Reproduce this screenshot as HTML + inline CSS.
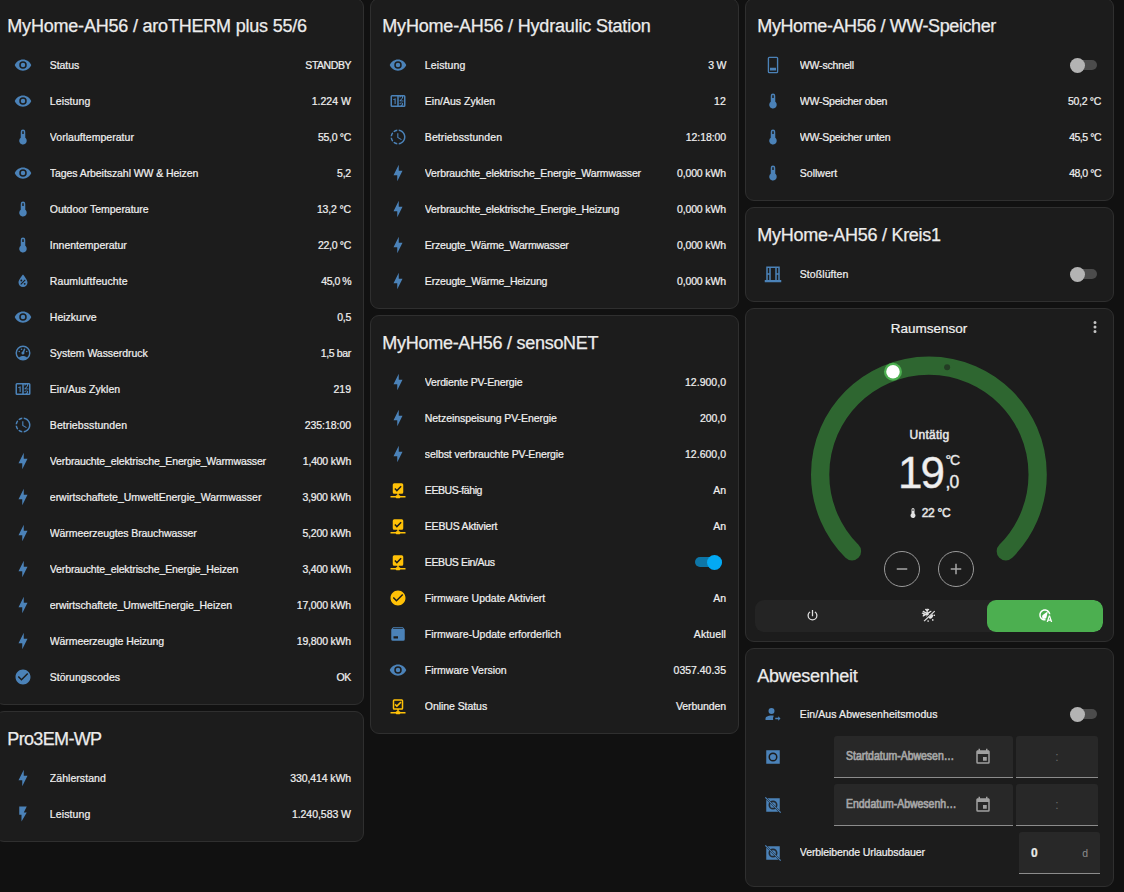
<!DOCTYPE html>
<html><head><meta charset="utf-8"><title>Dashboard</title><style>
*{box-sizing:border-box;margin:0;padding:0}
html,body{width:1124px;height:892px;overflow:hidden;background:#111111}
body{position:relative;-webkit-text-stroke:0.22px #f0f0f0;font-family:"Liberation Sans",sans-serif;color:#f0f0f0;font-size:10.5px}
.card{position:absolute;background:#1c1c1c;border:1px solid #2f2f2f;border-radius:9px;overflow:hidden}
.hdr{height:51px;padding:9px 12px 0 11.3px;-webkit-text-stroke:0.25px #ececec;line-height:36px;font-size:18px;white-space:nowrap;letter-spacing:-0.4px;color:#ececec}
.row{display:flex;align-items:center;height:30px;margin:0 12px 6px 12px;white-space:nowrap}
.ib{flex:0 0 30px;height:30px;display:flex;align-items:center;justify-content:center}
.ic{width:18px;height:18px;fill:#4b82b8;color:#4b82b8}
.ic.y{fill:#ffc107;color:#ffc107}
.n{margin-left:11.8px;flex:1 1 auto;overflow:hidden}
.v{flex:0 0 auto;text-align:right}
.tg{display:inline-block;position:relative;width:27px;height:15px;margin-right:4px;vertical-align:middle}
.tg i{position:absolute;left:0;top:2.25px;width:27px;height:10.5px;border-radius:6px;background:#4b4b4b}
.tg b{position:absolute;left:0;top:0;width:15px;height:15px;border-radius:50%;background:#b3b3b3}
.tg.on i{background:#0e76a7}
.tg.on b{left:12px;background:#03a9f4}
.ttitle{position:absolute;left:-1px;right:0;top:9px;text-align:center;font-size:13.5px;line-height:21px;letter-spacing:0px}
.tdots{position:absolute;left:340px;top:9px;width:18px;height:18px;fill:#c4c4c4}
.arc{position:absolute;left:-1px;top:-1px}
.tstate{position:absolute;left:0;right:0;top:118px;text-align:center;font-size:12px;line-height:16px;letter-spacing:0.25px;-webkit-text-stroke:0.5px #e1e1e1}
.tbig{position:absolute;left:0;right:0;top:139px;height:50px;text-align:center;line-height:50px;font-size:44px;letter-spacing:-2px;-webkit-text-stroke:0.4px #e1e1e1}
.tbig .d{position:relative;left:-9px}
.tbig .u{position:absolute;left:199.5px;top:-13px;font-size:14px;letter-spacing:-1.2px}
.tbig .f{position:absolute;left:199.5px;top:9px;font-size:17.5px;letter-spacing:-0.8px}
.tcur{position:absolute;left:0;right:0;top:196px;text-align:center;font-size:12px;line-height:16px;letter-spacing:-0.3px;-webkit-text-stroke:0.5px #e1e1e1}
.tcur svg{width:12px;height:12px;fill:#e1e1e1;vertical-align:-2px;margin-right:3px;margin-left:-2px}
.tbtn{position:absolute;top:242px;width:36px;height:36px;border:1px solid #9a9a9a;border-radius:50%;display:flex;align-items:center;justify-content:center}
.tbtn svg{width:18px;height:18px;fill:#a6a6a6}
.modes{position:absolute;left:9px;top:291px;width:348px;height:32px;border-radius:9px;background:#242424;display:flex;overflow:hidden}
.modes span{flex:1;display:flex;align-items:center;justify-content:center;border-radius:9px}
.modes svg{position:relative;left:-0.9px;top:-0.5px;width:15px;height:15px;fill:#e1e1e1;color:#e1e1e1}
.modes .act{background:#4caf50}
.modes .act svg{fill:#fff;color:#fff;left:0.3px}
.row.dr{height:42px}
.fld{height:42px;background:#282828;border-bottom:1px solid #8c8c8c;border-radius:3px 3px 0 0;display:flex;align-items:center;color:#a0a0a0;font-size:12px}
.fld.date{margin-left:46px;width:179px;padding:0 0 0 12px}
.fld.date em{font-style:normal;display:block;width:130px;transform:scaleX(0.872);transform-origin:0 50%;white-space:nowrap;-webkit-text-stroke:0.7px #a6a6a6;color:#a6a6a6;position:relative;top:-0.7px}
.fld.date svg{width:18px;height:18px;fill:#a0a0a0;margin-left:-2px}
.fld.time{margin-left:3px;width:82px;justify-content:center;color:#6a6a6a;padding-left:0;-webkit-text-stroke:0}
.fld.num{width:81px;margin-right:1px;padding:0 11px 0 12px;justify-content:space-between}
.fld.num b{color:#e8e8e8;font-weight:bold}
.fld.num u{text-decoration:none;color:#8c8c8c;font-size:10.5px;-webkit-text-stroke:0;margin-right:1px}
</style></head><body>
<svg width="0" height="0" style="position:absolute"><symbol id="i-eye" viewBox="0 0 24 24"><path d="M12,9A3,3 0 0,0 9,12A3,3 0 0,0 12,15A3,3 0 0,0 15,12A3,3 0 0,0 12,9M12,17A5,5 0 0,1 7,12A5,5 0 0,1 12,7A5,5 0 0,1 17,12A5,5 0 0,1 12,17M12,4.5C7,4.5 2.73,7.61 1,12C2.73,16.39 7,19.5 12,19.5C17,19.5 21.27,16.39 23,12C21.27,7.61 17,4.5 12,4.5Z"/></symbol><symbol id="i-therm" viewBox="0 0 24 24"><path d="M15,13V5A3,3 0 0,0 12,2A3,3 0 0,0 9,5V13C6.79,14.66 6.34,17.79 8,20C9.66,22.21 12.79,22.66 15,21C17.21,19.34 17.66,16.21 16,14C15.72,13.62 15.38,13.28 15,13M12,4A1,1 0 0,1 13,5V8H11V5A1,1 0 0,1 12,4Z"/></symbol><symbol id="i-waterpct" viewBox="0 0 24 24"><path d="M12,3.25C12,3.25 6,10 6,14C6,17.32 8.69,20 12,20A6,6 0 0,0 18,14C18,10 12,3.25 12,3.25M14.47,9.97L15.53,11.03L9.53,17.03L8.47,15.97M9.75,10A1.25,1.25 0 0,1 11,11.25A1.25,1.25 0 0,1 9.75,12.5A1.25,1.25 0 0,1 8.5,11.25A1.25,1.25 0 0,1 9.75,10M14.25,14.5A1.25,1.25 0 0,1 15.5,15.75A1.25,1.25 0 0,1 14.25,17A1.25,1.25 0 0,1 13,15.75A1.25,1.25 0 0,1 14.25,14.5Z"/></symbol><symbol id="i-gauge" viewBox="0 0 24 24"><path d="M12,2A10,10 0 0,0 2,12A10,10 0 0,0 12,22A10,10 0 0,0 22,12A10,10 0 0,0 12,2M12,4A8,8 0 0,1 20,12C20,14.4 19,16.5 17.3,18C15.9,16.7 14,16 12,16C10,16 8.2,16.7 6.7,18C5,16.5 4,14.4 4,12A8,8 0 0,1 12,4M14,5.89C13.62,5.9 13.26,6.15 13.1,6.54L11.81,9.77L11.71,10C11,10.13 10.41,10.6 10.14,11.26C9.73,12.29 10.23,13.45 11.26,13.86C12.29,14.27 13.45,13.77 13.86,12.74C14.12,12.08 14,11.32 13.57,10.76L13.67,10.5L14.96,7.29L14.97,7.26C15.17,6.75 14.92,6.17 14.41,5.96C14.28,5.91 14.15,5.89 14,5.89M10,6A1,1 0 0,0 9,7A1,1 0 0,0 10,8A1,1 0 0,0 11,7A1,1 0 0,0 10,6M7,9A1,1 0 0,0 6,10A1,1 0 0,0 7,11A1,1 0 0,0 8,10A1,1 0 0,0 7,9M17,9A1,1 0 0,0 16,10A1,1 0 0,0 17,11A1,1 0 0,0 18,10A1,1 0 0,0 17,9Z"/></symbol><symbol id="i-counter" viewBox="0 0 24 24"><path d="M4,4H20A2,2 0 0,1 22,6V18A2,2 0 0,1 20,20H4A2,2 0 0,1 2,18V6A2,2 0 0,1 4,4M4,6V18H11V6H4M20,18V6H18.76C19,6.54 18.95,7.07 18.95,7.13C18.88,7.8 18.41,8.5 18.24,8.75L15.91,11.3L19.23,11.28L19.24,12.5L14.04,12.47L14,11.47C14,11.47 17.05,8.24 17.2,7.95C17.34,7.67 17.91,6 16.5,6C15.27,6.05 15.41,7.3 15.41,7.3L13.87,7.31C13.87,7.31 13.88,6.65 14.25,6H13V18H15.58L15.57,17.14L16.54,17.13C16.54,17.13 17.45,16.97 17.46,16.08C17.5,15.08 16.65,15.08 16.5,15.08C16.37,15.08 15.43,15.13 15.43,15.95H13.91C13.91,15.95 13.95,13.89 16.5,13.89C19.1,13.89 18.96,15.91 18.96,15.91C18.96,15.91 19,17.16 17.85,17.63L18.37,18H20M8.92,16H7.42V10.2L5.62,10.76V9.53L8.76,8.41H8.92V16Z"/></symbol><symbol id="i-pclock" viewBox="0 0 24 24"><path d="M13,2.03V2.05L13,4.05C17.39,4.59 20.5,8.58 19.96,12.97C19.5,16.61 16.64,19.5 13,19.93V21.93C18.5,21.38 22.5,16.5 21.95,11C21.5,6.25 17.73,2.5 13,2.03M11,2.06C9.05,2.25 7.19,3 5.67,4.26L7.1,5.74C8.22,4.84 9.57,4.26 11,4.06V2.06M4.26,5.67C3,7.19 2.25,9.04 2.05,11H4.05C4.24,9.58 4.8,8.23 5.69,7.1L4.26,5.67M2.06,13C2.26,14.96 3.03,16.81 4.27,18.33L5.69,16.9C4.81,15.77 4.24,14.42 4.06,13H2.06M7.1,18.37L5.67,19.74C7.18,21 9.04,21.79 11,22V20C9.58,19.82 8.23,19.25 7.1,18.37M12.5,7V12.25L17,14.92L16.25,16.15L11,13V7H12.5Z"/></symbol><symbol id="i-bolt" viewBox="0 0 24 24"><path d="M11 15H6L13 1V9H18L11 23V15Z"/></symbol><symbol id="i-flash" viewBox="0 0 24 24"><path d="M7,2V13H10V22L17,10H13L17,2H7Z"/></symbol><symbol id="i-checkc" viewBox="0 0 24 24"><path d="M12 2C6.5 2 2 6.5 2 12S6.5 22 12 22 22 17.5 22 12 17.5 2 12 2M10 17L5 12L6.41 10.59L10 14.17L17.59 6.58L19 8L10 17Z"/></symbol><symbol id="i-cnet" viewBox="0 0 24 24"><path d="M17,3A2,2 0 0,1 19,5V15A2,2 0 0,1 17,17H13V19H14A1,1 0 0,1 15,20H22V22H15A1,1 0 0,1 14,23H10A1,1 0 0,1 9,22H2V20H9A1,1 0 0,1 10,19H11V17H7A2,2 0 0,1 5,15V5A2,2 0 0,1 7,3H17M10.5,14.2L16.9,7.8L15.5,6.4L10.5,11.4L8.5,9.4L7.1,10.8L10.5,14.2Z"/></symbol><symbol id="i-cneto" viewBox="0 0 24 24"><path d="M15,20A1,1 0 0,0 14,19H13V17H17A2,2 0 0,0 19,15V5A2,2 0 0,0 17,3H7A2,2 0 0,0 5,5V15A2,2 0 0,0 7,17H11V19H10A1,1 0 0,0 9,20H2V22H9A1,1 0 0,0 10,23H14A1,1 0 0,0 15,22H22V20H15M7,15V5H17V15H7M10.5,13.6L7.4,10.5L8.8,9.1L10.5,10.8L15.2,6.1L16.6,7.5L10.5,13.6Z"/></symbol><symbol id="i-package" viewBox="0 0 24 24"><path d="M5.12,5H18.87L17.93,4H5.93L5.12,5M20.54,5.23C20.83,5.57 21,6 21,6.5V19A2,2 0 0,1 19,21H5A2,2 0 0,1 3,19V6.5C3,6 3.17,5.57 3.46,5.23L4.84,3.55C5.12,3.21 5.53,3 6,3H18C18.47,3 18.88,3.21 19.15,3.55L20.54,5.23M6,18H12V15H6V18Z"/></symbol><symbol id="i-tswoff" viewBox="0 0 24 24"><path d="M17,1H7A2,2 0 0,0 5,3V21A2,2 0 0,0 7,23H17A2,2 0 0,0 19,21V3A2,2 0 0,0 17,1M17.2,21.2H6.8V2.8H17.2V21.2M16,19.4H8V15.6H16V19.4Z"/></symbol><symbol id="i-window" viewBox="0 0 24 24"><path d="M21,20V2H3V20H1V23H23V20M19,4V11H17V4M5,4H7V11H5M5,20V13H7V20M9,20V4H15V20M17,20V13H19V20Z"/></symbol><symbol id="i-accarrow" viewBox="0 0 24 24"><path d="M19,21V19H15V17H19V15L22,18L19,21M10,4A4,4 0 0,1 14,8A4,4 0 0,1 10,12A4,4 0 0,1 6,8A4,4 0 0,1 10,4M10,14C11.15,14 12.25,14.12 13.24,14.34C12.46,15.35 12,16.62 12,18C12,18.7 12.12,19.37 12.34,20H2V18C2,15.79 5.58,14 10,14Z"/></symbol><symbol id="i-dots" viewBox="0 0 24 24"><path d="M12,16A2,2 0 0,1 14,18A2,2 0 0,1 12,20A2,2 0 0,1 10,18A2,2 0 0,1 12,16M12,10A2,2 0 0,1 14,12A2,2 0 0,1 12,14A2,2 0 0,1 10,12A2,2 0 0,1 12,10M12,4A2,2 0 0,1 14,6A2,2 0 0,1 12,8A2,2 0 0,1 10,6A2,2 0 0,1 12,4Z"/></symbol><symbol id="i-cal" viewBox="0 0 24 24"><path d="M19,19H5V8H19M16,1V3H8V1H6V3H5C3.89,3 3,3.89 3,5V19A2,2 0 0,0 5,21H19A2,2 0 0,0 21,19V5C21,3.89 20.1,3 19,3H18V1M17,12H12V17H17V12Z"/></symbol><symbol id="i-minus" viewBox="0 0 24 24"><path d="M19,13H5V11H19V13Z"/></symbol><symbol id="i-plus" viewBox="0 0 24 24"><path d="M19,13H13V19H11V13H5V11H11V5H13V11H19V13Z"/></symbol><symbol id="i-power" viewBox="0 0 24 24"><path d="M16.56,5.44L15.11,6.89C16.84,7.94 18,9.83 18,12A6,6 0 0,1 12,18A6,6 0 0,1 6,12C6,9.83 7.16,7.94 8.88,6.88L7.44,5.44C5.36,6.88 4,9.28 4,12A8,8 0 0,0 12,20A8,8 0 0,0 20,12C20,9.28 18.64,6.88 16.56,5.44M13,3H11V13H13"/></symbol><symbol id="i-boxc" viewBox="0 0 24 24"><path fill-rule="evenodd" d="M3,3H21V21H3ZM12,6A6,6 0 1,0 12,18A6,6 0 1,0 12,6ZM12,8.2A3.8,3.8 0 1,1 12,15.8A3.8,3.8 0 1,1 12,8.2Z"/><circle cx="12" cy="12" r="3.8" fill-opacity="0.8"/></symbol><symbol id="i-boxoff" viewBox="0 0 24 24"><path fill-rule="evenodd" d="M4.6,3H21V19.4ZM3,4.8L19.2,21H3Z"/><path fill="#1c1c1c" fill-opacity=".85" fill-rule="evenodd" d="M12,6A6,6 0 1,0 12,18A6,6 0 1,0 12,6ZM12,8.2A3.8,3.8 0 1,1 12,15.8A3.8,3.8 0 1,1 12,8.2Z"/><path d="M1.2,2.3L2.3,1.2L22.8,21.7L21.7,22.8Z"/></symbol><clipPath id="cs"><path d="M0,0H22.6L0,22.6Z"/></clipPath><symbol id="i-sunsnow" viewBox="0 0 24 24"><path d="M21.3,4.2L22.7,5.6L5.6,21.7L4.2,20.3Z"/>
<g clip-path="url(#cs)" stroke="currentColor" stroke-width="2.1" fill="none" stroke-linecap="round"><path d="M9.8,2V16M3.6,5.4L16,12.6M3.6,12.6L16,5.4M7.4,2.2L9.8,4.4L12.2,2.2M2.2,8.2L5,9L4.2,11.8"/></g>
<path d="M17.9,9.5A4.2,4.2 0 0,1 11.9,15.5Z"/><circle cx="21.2" cy="11.6" r="1.35"/><circle cx="18.8" cy="19" r="1.35"/><circle cx="11.4" cy="20.8" r="1.35"/></symbol><symbol id="i-thauto" viewBox="0 0 24 24"><path d="M11 2C6 2 2 6 2 11S6 20 11 20C11.3 20 11.7 20 12 19.9V17.6C11.7 17.7 11.3 17.7 11 17.7C7.3 17.7 4.3 14.7 4.3 11S7.3 4.3 11 4.3C14.4 4.3 17.2 6.7 17.6 10H19.9C19.4 5.5 15.6 2 11 2M17.3 12L13.8 22.3H16L16.7 20.3H19.9L20.6 22.3H22.8L19.3 12H17.3M17.2 18.4L18.3 14.9L19.4 18.4H17.2M15.8 5L7.6 11.2C6.2 12.6 6.2 14.9 7.6 16.3C9 17.7 11.3 17.7 12.7 16.3C13.1 15.9 13.4 15.4 13.6 14.9L15.8 5Z"/></symbol></svg>
<div class="card" style="left:-5px;top:-2px;width:369px;height:707px"><div class="hdr" style="letter-spacing:-0.203px">MyHome-AH56 / aroTHERM plus 55/6</div><div class="row"><span class="ib"><svg class="ic "><use href="#i-eye"/></svg></span><span class="n" style="letter-spacing:-0.08px">Status</span><span class="v" style="letter-spacing:-0.45px">STANDBY</span></div><div class="row"><span class="ib"><svg class="ic "><use href="#i-eye"/></svg></span><span class="n" style="letter-spacing:0.12px">Leistung</span><span class="v" style="letter-spacing:0.033px">1.224 W</span></div><div class="row"><span class="ib"><svg class="ic "><use href="#i-therm"/></svg></span><span class="n" style="letter-spacing:0.044px">Vorlauftemperatur</span><span class="v" style="letter-spacing:-0.317px">55,0 °C</span></div><div class="row"><span class="ib"><svg class="ic "><use href="#i-eye"/></svg></span><span class="n" style="letter-spacing:-0.071px">Tages Arbeitszahl WW &amp; Heizen</span><span class="v" style="letter-spacing:-0.2px">5,2</span></div><div class="row"><span class="ib"><svg class="ic "><use href="#i-therm"/></svg></span><span class="n" style="letter-spacing:-0.044px">Outdoor Temperature</span><span class="v" style="letter-spacing:-0.15px">13,2 °C</span></div><div class="row"><span class="ib"><svg class="ic "><use href="#i-therm"/></svg></span><span class="n" style="letter-spacing:-0.0px">Innentemperatur</span><span class="v" style="letter-spacing:-0.317px">22,0 °C</span></div><div class="row"><span class="ib"><svg class="ic "><use href="#i-waterpct"/></svg></span><span class="n" style="letter-spacing:0.1px">Raumluftfeuchte</span><span class="v" style="letter-spacing:-0.5px">45,0 %</span></div><div class="row"><span class="ib"><svg class="ic "><use href="#i-eye"/></svg></span><span class="n" style="letter-spacing:0.013px">Heizkurve</span><span class="v" style="letter-spacing:-0.3px">0,5</span></div><div class="row"><span class="ib"><svg class="ic "><use href="#i-gauge"/></svg></span><span class="n" style="letter-spacing:-0.047px">System Wasserdruck</span><span class="v" style="letter-spacing:-0.333px">1,5 bar</span></div><div class="row"><span class="ib"><svg class="ic "><use href="#i-counter"/></svg></span><span class="n" style="letter-spacing:0.023px">Ein/Aus Zyklen</span><span class="v" style="letter-spacing:0.0px">219</span></div><div class="row"><span class="ib"><svg class="ic "><use href="#i-pclock"/></svg></span><span class="n" style="letter-spacing:0.093px">Betriebsstunden</span><span class="v" style="letter-spacing:-0.05px">235:18:00</span></div><div class="row"><span class="ib"><svg class="ic "><use href="#i-bolt"/></svg></span><span class="n" style="letter-spacing:-0.124px">Verbrauchte_elektrische_Energie_Warmwasser</span><span class="v" style="letter-spacing:-0.225px">1,400 kWh</span></div><div class="row"><span class="ib"><svg class="ic "><use href="#i-bolt"/></svg></span><span class="n" style="letter-spacing:-0.01px">erwirtschaftete_UmweltEnergie_Warmwasser</span><span class="v" style="letter-spacing:-0.175px">3,900 kWh</span></div><div class="row"><span class="ib"><svg class="ic "><use href="#i-bolt"/></svg></span><span class="n" style="letter-spacing:-0.092px">Wärmeerzeugtes Brauchwasser</span><span class="v" style="letter-spacing:-0.175px">5,200 kWh</span></div><div class="row"><span class="ib"><svg class="ic "><use href="#i-bolt"/></svg></span><span class="n" style="letter-spacing:-0.127px">Verbrauchte_elektrische_Energie_Heizen</span><span class="v" style="letter-spacing:-0.175px">3,400 kWh</span></div><div class="row"><span class="ib"><svg class="ic "><use href="#i-bolt"/></svg></span><span class="n" style="letter-spacing:-0.046px">erwirtschaftete_UmweltEnergie_Heizen</span><span class="v" style="letter-spacing:-0.177px">17,000 kWh</span></div><div class="row"><span class="ib"><svg class="ic "><use href="#i-bolt"/></svg></span><span class="n" style="letter-spacing:-0.09px">Wärmeerzeugte Heizung</span><span class="v" style="letter-spacing:-0.177px">19,800 kWh</span></div><div class="row"><span class="ib"><svg class="ic "><use href="#i-checkc"/></svg></span><span class="n" style="letter-spacing:0.017px">Störungscodes</span><span class="v" style="letter-spacing:-0.3px">OK</span></div></div>
<div class="card" style="left:-5px;top:711px;width:369px;height:131px"><div class="hdr" style="letter-spacing:-0.65px">Pro3EM-WP</div><div class="row"><span class="ib"><svg class="ic "><use href="#i-bolt"/></svg></span><span class="n" style="letter-spacing:0.05px">Zählerstand</span><span class="v" style="letter-spacing:-0.1px">330,414 kWh</span></div><div class="row"><span class="ib"><svg class="ic "><use href="#i-flash"/></svg></span><span class="n" style="letter-spacing:0.12px">Leistung</span><span class="v" style="letter-spacing:-0.04px">1.240,583 W</span></div></div>
<div class="card" style="left:370px;top:-2px;width:369px;height:311px"><div class="hdr" style="letter-spacing:-0.186px">MyHome-AH56 / Hydraulic Station</div><div class="row"><span class="ib"><svg class="ic "><use href="#i-eye"/></svg></span><span class="n" style="letter-spacing:0.12px">Leistung</span><span class="v" style="letter-spacing:-0.3px">3 W</span></div><div class="row"><span class="ib"><svg class="ic "><use href="#i-counter"/></svg></span><span class="n" style="letter-spacing:0.023px">Ein/Aus Zyklen</span><span class="v" style="letter-spacing:0.2px">12</span></div><div class="row"><span class="ib"><svg class="ic "><use href="#i-pclock"/></svg></span><span class="n" style="letter-spacing:0.093px">Betriebsstunden</span><span class="v" style="letter-spacing:-0.086px">12:18:00</span></div><div class="row"><span class="ib"><svg class="ic "><use href="#i-bolt"/></svg></span><span class="n" style="letter-spacing:-0.124px">Verbrauchte_elektrische_Energie_Warmwasser</span><span class="v" style="letter-spacing:-0.125px">0,000 kWh</span></div><div class="row"><span class="ib"><svg class="ic "><use href="#i-bolt"/></svg></span><span class="n" style="letter-spacing:-0.116px">Verbrauchte_elektrische_Energie_Heizung</span><span class="v" style="letter-spacing:-0.125px">0,000 kWh</span></div><div class="row"><span class="ib"><svg class="ic "><use href="#i-bolt"/></svg></span><span class="n" style="letter-spacing:-0.183px">Erzeugte_Wärme_Warmwasser</span><span class="v" style="letter-spacing:-0.125px">0,000 kWh</span></div><div class="row"><span class="ib"><svg class="ic "><use href="#i-bolt"/></svg></span><span class="n" style="letter-spacing:-0.162px">Erzeugte_Wärme_Heizung</span><span class="v" style="letter-spacing:-0.125px">0,000 kWh</span></div></div>
<div class="card" style="left:370px;top:315px;width:369px;height:419px"><div class="hdr" style="letter-spacing:-0.276px">MyHome-AH56 / sensoNET</div><div class="row"><span class="ib"><svg class="ic "><use href="#i-bolt"/></svg></span><span class="n" style="letter-spacing:-0.137px">Verdiente PV-Energie</span><span class="v" style="letter-spacing:0.014px">12.900,0</span></div><div class="row"><span class="ib"><svg class="ic "><use href="#i-bolt"/></svg></span><span class="n" style="letter-spacing:-0.064px">Netzeinspeisung PV-Energie</span><span class="v" style="letter-spacing:-0.05px">200,0</span></div><div class="row"><span class="ib"><svg class="ic "><use href="#i-bolt"/></svg></span><span class="n" style="letter-spacing:-0.096px">selbst verbrauchte PV-Energie</span><span class="v" style="letter-spacing:0.014px">12.600,0</span></div><div class="row"><span class="ib"><svg class="ic y"><use href="#i-cnet"/></svg></span><span class="n" style="letter-spacing:-0.42px">EEBUS-fähig</span><span class="v" style="letter-spacing:-0.1px">An</span></div><div class="row"><span class="ib"><svg class="ic y"><use href="#i-cnet"/></svg></span><span class="n" style="letter-spacing:-0.186px">EEBUS Aktiviert</span><span class="v" style="letter-spacing:-0.1px">An</span></div><div class="row"><span class="ib"><svg class="ic y"><use href="#i-cnet"/></svg></span><span class="n" style="letter-spacing:-0.383px">EEBUS Ein/Aus</span><span class="v"><span class="tg on"><i></i><b></b></span></span></div><div class="row"><span class="ib"><svg class="ic y"><use href="#i-checkc"/></svg></span><span class="n" style="letter-spacing:0.009px">Firmware Update Aktiviert</span><span class="v" style="letter-spacing:-0.1px">An</span></div><div class="row"><span class="ib"><svg class="ic "><use href="#i-package"/></svg></span><span class="n" style="letter-spacing:-0.007px">Firmware-Update erforderlich</span><span class="v" style="letter-spacing:0.1px">Aktuell</span></div><div class="row"><span class="ib"><svg class="ic "><use href="#i-eye"/></svg></span><span class="n" style="letter-spacing:0.014px">Firmware Version</span><span class="v" style="letter-spacing:-0.011px">0357.40.35</span></div><div class="row"><span class="ib"><svg class="ic y"><use href="#i-cneto"/></svg></span><span class="n" style="letter-spacing:-0.058px">Online Status</span><span class="v" style="letter-spacing:-0.075px">Verbunden</span></div></div>
<div class="card" style="left:745px;top:-2px;width:369px;height:203px"><div class="hdr" style="letter-spacing:-0.404px">MyHome-AH56 / WW-Speicher</div><div class="row"><span class="ib"><svg class="ic "><use href="#i-tswoff"/></svg></span><span class="n" style="letter-spacing:-0.167px">WW-schnell</span><span class="v"><span class="tg"><i></i><b></b></span></span></div><div class="row"><span class="ib"><svg class="ic "><use href="#i-therm"/></svg></span><span class="n" style="letter-spacing:-0.213px">WW-Speicher oben</span><span class="v" style="letter-spacing:-0.317px">50,2 °C</span></div><div class="row"><span class="ib"><svg class="ic "><use href="#i-therm"/></svg></span><span class="n" style="letter-spacing:-0.188px">WW-Speicher unten</span><span class="v" style="letter-spacing:-0.467px">45,5 °C</span></div><div class="row"><span class="ib"><svg class="ic "><use href="#i-therm"/></svg></span><span class="n" style="letter-spacing:0.014px">Sollwert</span><span class="v" style="letter-spacing:-0.467px">48,0 °C</span></div></div>
<div class="card" style="left:745px;top:207px;width:369px;height:95px"><div class="hdr" style="letter-spacing:-0.279px">MyHome-AH56 / Kreis1</div><div class="row"><span class="ib"><svg class="ic "><use href="#i-window"/></svg></span><span class="n" style="letter-spacing:0.067px">Stoßlüften</span><span class="v"><span class="tg"><i></i><b></b></span></span></div></div>
<div class="card" style="left:745px;top:308px;width:369px;height:334px">
<div class="ttitle">Raumsensor</div>
<svg class="tdots"><use href="#i-dots"/></svg>
<svg class="arc" width="369" height="333" viewBox="0 0 369 333">
<path d="M107.00,243.30A108.75,108.75 0 1,1 260.80,243.30" fill="none" stroke="#2e6630" stroke-width="18.3" stroke-linecap="round"/>
<circle cx="202.12" cy="59.19" r="3" fill="#1c1c1c" fill-opacity=".55"/>
<circle cx="147.98" cy="63.75" r="9" fill="#4caf50"/>
<circle cx="147.98" cy="63.75" r="6.75" fill="#fff"/>
</svg>
<div class="tstate">Untätig</div>
<div class="tbig"><span class="d">19</span><span class="u">°C</span><span class="f">,0</span></div>
<div class="tcur"><svg><use href="#i-therm"/></svg>22 °C</div>
<div class="tbtn" style="left:137.5px"><svg><use href="#i-minus"/></svg></div>
<div class="tbtn" style="left:191.5px"><svg><use href="#i-plus"/></svg></div>
<div class="modes"><span><svg><use href="#i-power"/></svg></span><span><svg><use href="#i-sunsnow"/></svg></span><span class="act"><svg><use href="#i-thauto"/></svg></span></div>
</div>
<div class="card" style="left:745px;top:648px;width:369px;height:239px"><div class="hdr" style="letter-spacing:-0.26px">Abwesenheit</div><div class="row" style="margin-top:-1px;margin-bottom:7px"><span class="ib"><svg class="ic "><use href="#i-accarrow"/></svg></span><span class="n" style="letter-spacing:0.096px">Ein/Aus Abwesenheitsmodus</span><span class="v"><span class="tg"><i></i><b></b></span></span></div><div class="row dr"><span class="ib"><svg class="ic "><use href="#i-boxc"/></svg></span><span class="fld date"><em>Startdatum-Abwesen…</em><svg><use href="#i-cal"/></svg></span><span class="fld time">:</span></div><div class="row dr"><span class="ib"><svg class="ic "><use href="#i-boxoff"/></svg></span><span class="fld date"><em>Enddatum-Abwesenh…</em><svg><use href="#i-cal"/></svg></span><span class="fld time">:</span></div><div class="row dr"><span class="ib"><svg class="ic "><use href="#i-boxoff"/></svg></span><span class="n" style="letter-spacing:-0.09px;position:relative;top:-1px">Verbleibende Urlaubsdauer</span><span class="fld num"><b>0</b><u>d</u></span></div></div>
</body></html>
